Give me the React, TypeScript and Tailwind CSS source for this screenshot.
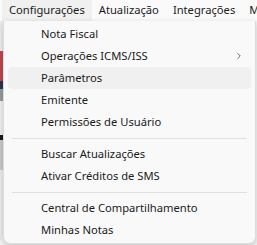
import { ChevronRight } from "lucide-react"

const groups = [
  [
    { label: "Nota Fiscal" },
    { label: "Operações ICMS/ISS", sub: true },
    { label: "Parâmetros", active: true },
    { label: "Emitente" },
    { label: "Permissões de Usuário" },
  ],
  [{ label: "Buscar Atualizações" }, { label: "Ativar Créditos de SMS" }],
  [{ label: "Central de Compartilhamento" }, { label: "Minhas Notas" }],
]

const menus = ["Configurações", "Atualização", "Integrações", "Menu"]

export default function App() {
  return (
    <div
      className="relative w-[257px] h-[245px] overflow-hidden bg-[#f3f3f3] text-[11.2px] text-[#1a1a1a]"
      style={{ fontFamily: '"Noto Sans", "Open Sans", sans-serif' }}
    >
      <div className="flex h-[21px] items-center bg-[#fafafa] pl-[2px]">
        {menus.map((m, i) => (
          <div
            key={m}
            className={
              i === 0
                ? "flex h-full items-center px-[7px] bg-[#f0f0f0] shrink-0"
                : "flex h-full items-center px-[7px] shrink-0"
            }
          >
            {m}
          </div>
        ))}
      </div>

      {/* app content behind the menu */}
      <div className="flex flex-col w-[3px]">
        <div className="h-[30px] bg-[#ececec]" />
        <div className="h-[30px] bg-[#c9414a]" />
        <div className="h-[8px] bg-[#2b3550]" />
        <div className="h-[12px] bg-[#9a9a9a]" />
        <div className="h-[34px] bg-[#f0f0f0]" />
        <div className="h-[5px] bg-[#1c1c1c]" />
        <div className="h-[30px] bg-[#c8c8c8]" />
        <div className="h-[70px] bg-[#ececec]" />
      </div>

      <div className="absolute left-[3px] top-[21px] w-[253px] rounded-b-[7px] border border-t-0 border-[#dcdcdc] bg-[#f9f9f9] py-[2px] shadow-[0_2px_6px_rgba(0,0,0,0.18)]">
        {groups.map((g, gi) => (
          <div key={gi}>
            {gi > 0 && (
              <div className="flex h-[10px] items-center px-[8px]">
                <div className="h-px w-full bg-[#e0e0e0]" />
              </div>
            )}
            {g.map((it) => (
              <div key={it.label} className="px-[4px]">
                <div
                  className={
                    it.active
                      ? "flex h-[22px] items-center justify-between rounded-[4px] bg-[#f0f0f0] pl-[33px] pr-[7px]"
                      : "flex h-[22px] items-center justify-between rounded-[4px] pl-[33px] pr-[7px]"
                  }
                >
                  <span>{it.label}</span>
                  {it.sub && <ChevronRight size={10} strokeWidth={1.75} className="text-[#333]" />}
                </div>
              </div>
            ))}
          </div>
        ))}
      </div>
    </div>
  )
}
